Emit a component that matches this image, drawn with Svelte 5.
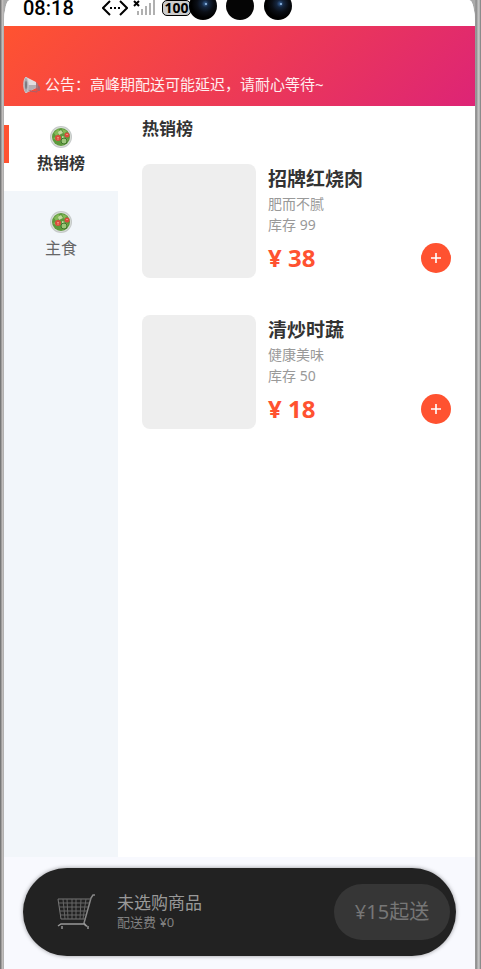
<script lang="ts">
  const categories = [
    { id: 1, name: "热销榜" },
    { id: 2, name: "主食" },
  ];

  const dishes = [
    { id: 1, name: "招牌红烧肉", desc: "肥而不腻", stock: 99, price: 38 },
    { id: 2, name: "清炒时蔬", desc: "健康美味", stock: 50, price: 18 },
  ];

  const minOrder = 15;
  const deliveryFee = 0;

  let activeId = $state(1);
  let total = $state(0);
  let count = $state(0);

  let activeName = $derived(categories.find((c) => c.id === activeId)?.name);

  function addDish(price: number): void {
    count += 1;
    total += price;
  }
</script>

<div class="device">
  <div class="screen">
    <div class="status-bar">
      <span class="clock">08:18</span>
      <svg class="link-icon" width="26" height="18" viewBox="0 0 26 18" fill="none" stroke="#000" stroke-width="2">
        <path d="M8 1 1 8l7 7M18 1l7 7-7 7" />
        <path d="M8 8h2M12 8h2M16 8h2" />
      </svg>
      <svg class="signal-icon" width="23" height="16" viewBox="0 0 23 16">
        <path d="M1 1l5 5M6 1 1 6" stroke="#000" stroke-width="2" />
        <path d="M4 11h2v4H4zM8 9h2v6H8zM12 6h2v9h-2zM16 3h2v12h-2zM20 0h2v15h-2z" fill="#b0b0b0" />
      </svg>
      <span class="battery">100</span>
      <svg class="cameras" width="104" height="20" viewBox="0 0 104 20">
        <defs>
          <radialGradient id="lens" cx="0.58" cy="0.42" r="0.5">
            <stop offset="0" stop-color="#39659b" />
            <stop offset="0.25" stop-color="#15263f" />
            <stop offset="0.6" stop-color="#0a0e15" />
            <stop offset="1" stop-color="#000" />
          </radialGradient>
        </defs>
        <circle cx="14" cy="6" r="14" fill="url(#lens)" />
        <circle cx="51" cy="6" r="14" fill="#050505" />
        <circle cx="89" cy="6" r="14" fill="url(#lens)" />
        <circle cx="17" cy="4" r="1" fill="#9dc4ee" />
        <circle cx="92" cy="4" r="1" fill="#9dc4ee" />
      </svg>
    </div>

    <header class="banner">
      <svg class="horn" width="18" height="18" viewBox="0 0 18 18">
        <path d="M3 1 13 6v6L3 17z" fill="#e2dde0" />
        <path d="M3 9 13 9v3L3 17z" fill="#b5aeb4" />
        <path d="M3 1C0 3 0 14 3 17c3-3 3-13 0-16z" fill="#aaa8ae" stroke="#c9c7cd" />
        <ellipse cx="3" cy="9" rx="1" ry="4" fill="#7c797f" />
        <path d="M13 6l2 2v5l-2-1z" fill="#a8757b" />
        <path d="M7 14v1l7 1v-4" fill="none" stroke="#a8606a" />
        <path d="M15 9l2 2v4h-2z" fill="#a8606a" />
      </svg>
      <span>公告：高峰期配送可能延迟，请耐心等待~</span>
    </header>

    <main class="menu">
      <nav class="sidebar">
        {#each categories as category (category.id)}
          <button
            class="category"
            class:active={category.id === activeId}
            onclick={() => (activeId = category.id)}
          >
            <svg width="22" height="22" viewBox="0 0 22 22">
              <circle cx="11" cy="11" r="11" fill="#c5c9c8" />
              <circle cx="11" cy="11" r="10" fill="#dadfd9" />
              <circle cx="11" cy="11" r="9" fill="#5d993c" />
              <path d="M4 7l4-4 3 3-5 4zM12 3l5 2-3 3zM3 12l3-1 1 4zM11 15l5-3 2 2-5 5z" fill="#85b957" />
              <path d="M8 6l3-2 2 3-4 2zM12 10l3 1-3 2z" fill="#c3d9a0" />
              <circle cx="14" cy="15" r="3" fill="#9cc57a" stroke="#3f752b" />
              <circle cx="8" cy="12" r="3" fill="#db4b3d" />
              <circle cx="17" cy="9" r="2.5" fill="#db4b3d" />
              <path d="M7 11l1 1 1-1M8 12v2M16 8l1 1 1-1" fill="none" stroke="#f2a08c" stroke-width="0.8" />
            </svg>
            <span>{category.name}</span>
          </button>
        {/each}
      </nav>

      <section class="dishes">
        <h2>{activeName}</h2>
        {#each dishes as dish (dish.id)}
          <article class="dish">
            <div class="photo"></div>
            <div class="info">
              <h3>{dish.name}</h3>
              <p>{dish.desc}</p>
              <p>库存 {dish.stock}</p>
              <div class="buy">
                <span class="price">¥ {dish.price}</span>
                <button class="add" aria-label="加入购物车" onclick={() => addDish(dish.price)}>
                  <svg width="10" height="10" viewBox="0 0 10 10" stroke="#fff" stroke-width="1.6">
                    <path d="M5 0v10M0 5h10" />
                  </svg>
                </button>
              </div>
            </div>
          </article>
        {/each}
      </section>
    </main>

    <footer class="footer">
      <div class="cart">
        <svg class="cart-icon" width="40" height="38" viewBox="0 0 40 38" fill="none" stroke="#777">
          <path d="M38 2h-2l-2 3-7 25 2 3" stroke="#888" stroke-width="1.5" />
          <path d="M1 6h33M1 6l3 20h25" />
          <path d="M2 10h30M2 14h29M3 18h27M3 22h26M6 6l2 20M10 6l1 20M15 6v20M19 6v20M24 6l-1 20M29 6l-3 20" stroke="#666" />
          <path d="M1 33l3-2h23l4 3" stroke="#999" stroke-width="1.5" />
          <path d="M5 33v3M31 33v3" stroke-width="2" />
        </svg>
        <div class="summary">
          <strong>{count ? `¥${total}` : "未选购商品"}</strong>
          <span>配送费 ¥{deliveryFee}</span>
        </div>
        <button class="checkout" disabled={total < minOrder}>
          {total < minOrder ? `¥${minOrder}起送` : "去结算"}
        </button>
      </div>
    </footer>
  </div>
</div>

<style>
  :global(body) {
    font-family: "Noto Sans", "Noto Sans CJK SC", sans-serif;
    color: #333;
  }

  * {
    box-sizing: border-box;
  }

  button {
    border: 0;
    padding: 0;
    font: inherit;
    cursor: pointer;
  }

  h2,
  h3,
  p {
    margin: 0;
  }

  svg {
    display: block;
    flex-shrink: 0;
  }

  .device {
    min-height: 100vh;
    display: flex;
    padding: 0 6px 0 4px;
    background: linear-gradient(90deg, #777 0, #777 1px, #c8c4c2 2px, #aaa 4px, #aaa calc(100% - 6px), #858585 calc(100% - 5px), #bbb calc(100% - 3px), #c8c8c8 calc(100% - 2px), #777 100%);
  }

  .screen {
    flex: 1;
    min-width: 0;
    display: flex;
    flex-direction: column;
    overflow: hidden;
    border-radius: 6px 6px 0 0 / 22px 22px 0 0;
    background: #f8f9fe;
  }

  .status-bar {
    height: 26px;
    display: flex;
    align-items: flex-start;
    padding-left: 19px;
    background: #fff;
    color: #000;
  }

  .clock {
    width: 79px;
    font-family: Roboto, sans-serif;
    font-size: 20px;
    line-height: 16px;
    font-weight: 500;
  }

  .signal-icon {
    margin: 0 6px 0 5px;
  }

  .battery {
    width: 29px;
    height: 16px;
    border: 1px solid #000;
    border-radius: 5px;
    background: #ccc;
    font-size: 14px;
    line-height: 14px;
    font-weight: 700;
    text-align: center;
  }

  .cameras {
    margin-left: -2px;
  }

  .banner {
    height: 80px;
    display: flex;
    align-items: flex-end;
    gap: 4px;
    padding: 0 19px 12px;
    background: linear-gradient(135deg, #ff5330, #dd2476);
    color: #ffeef0;
    font-size: 15px;
    line-height: 20px;
  }

  .menu {
    flex: 1;
    display: flex;
    background: #fff;
  }

  .sidebar {
    width: 114px;
    flex-shrink: 0;
    background: #f2f6fa;
  }

  .category {
    position: relative;
    width: 100%;
    height: 85px;
    display: flex;
    flex-direction: column;
    align-items: center;
    justify-content: center;
    gap: 4px;
    padding-top: 2px;
    background: transparent;
    color: #666;
    font-size: 16px;
    line-height: 22px;
  }

  .category.active {
    background: #fff;
    color: #333;
    font-weight: 700;
  }

  .category.active::before {
    content: "";
    position: absolute;
    left: 0;
    top: 19px;
    width: 5px;
    height: 38px;
    background: #ff5230;
  }

  .dishes {
    flex: 1;
    min-width: 0;
    padding: 12px 24px;
  }

  h2 {
    font-size: 17px;
    line-height: 22px;
  }

  .dish {
    display: flex;
    gap: 12px;
    margin: 24px 0 37px;
  }

  .dish + .dish {
    margin-top: 0;
  }

  .photo {
    width: 114px;
    height: 114px;
    flex-shrink: 0;
    border-radius: 8px;
    background: #eee;
  }

  .info {
    flex: 1;
    min-width: 0;
  }

  h3 {
    padding-top: 1px;
    font-size: 19px;
    line-height: 28px;
  }

  p {
    color: #999;
    font-size: 14px;
    line-height: 21px;
  }

  .buy {
    display: flex;
    align-items: center;
    justify-content: space-between;
    margin-top: 8px;
  }

  .price {
    color: #ff5230;
    font-size: 24px;
    line-height: 30px;
    font-weight: 700;
  }

  .add {
    width: 30px;
    height: 30px;
    display: grid;
    place-items: center;
    border-radius: 50%;
    background: #ff5230;
  }

  .footer {
    padding: 11px 19px 13px;
  }

  .cart {
    height: 88px;
    display: flex;
    align-items: center;
    padding: 0 6px 0 34px;
    border-radius: 44px;
    background: #222;
    box-shadow: 0 0 4px rgba(0, 0, 0, 0.4);
  }

  .summary {
    flex: 1;
    margin-left: 20px;
    display: flex;
    flex-direction: column;
    color: #808080;
    font-size: 13px;
    line-height: 18px;
  }

  .summary strong {
    color: #999;
    font-size: 17px;
    line-height: 20px;
    font-weight: 400;
  }

  .checkout {
    width: 116px;
    height: 56px;
    padding-bottom: 4px;
    border-radius: 28px;
    background: #ff5230;
    color: #fff;
    font-size: 20px;
  }

  .checkout:disabled {
    background: #363636;
    color: #777;
    cursor: default;
  }
</style>
